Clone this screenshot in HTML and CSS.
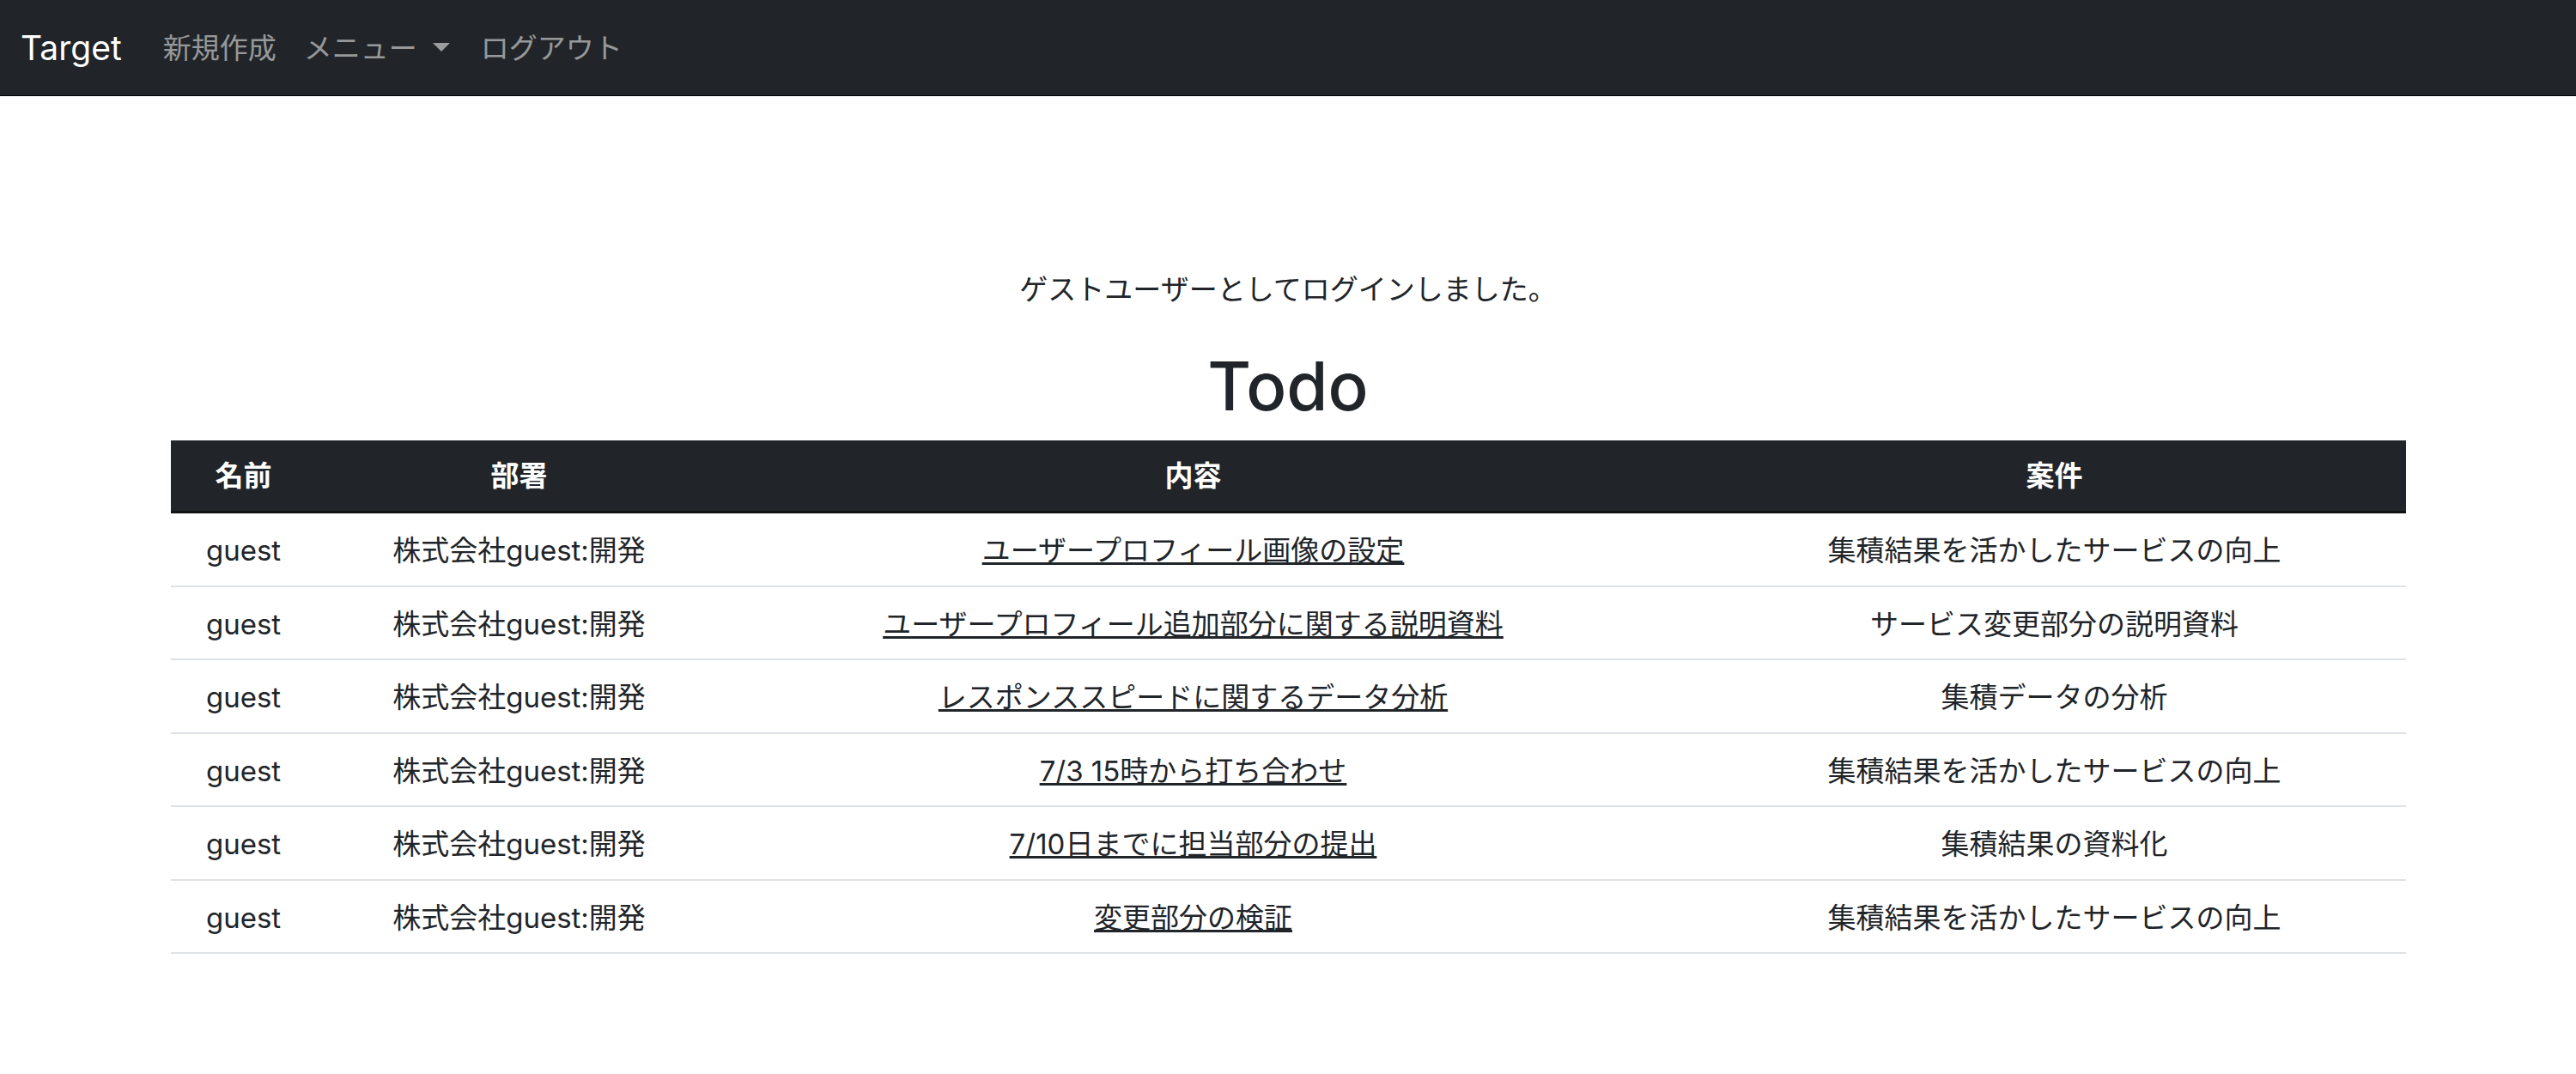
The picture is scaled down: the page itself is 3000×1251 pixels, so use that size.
FILE: index.html
```html
<!DOCTYPE html>
<html lang="ja">
<head>
<meta charset="utf-8">
<title>Todo</title>
<link rel="stylesheet" href="styles.css">
</head>
<body>
<nav class="navbar">
  <a class="brand" href="#">Target</a>
  <ul class="nav">
    <li><a class="nav-link" href="#">新規作成</a></li>
    <li><a class="nav-link dropdown-toggle" href="#">メニュー</a></li>
    <li><a class="nav-link" href="#">ログアウト</a></li>
  </ul>
</nav>
<main class="main">
  <p class="notice">ゲストユーザーとしてログインしました。</p>
  <h1 class="title">Todo</h1>
  <table class="todo-table">
    <colgroup>
      <col class="c-name">
      <col class="c-dept">
      <col class="c-content">
      <col class="c-project">
    </colgroup>
    <thead>
      <tr><th>名前</th><th>部署</th><th>内容</th><th class="proj">案件</th></tr>
    </thead>
    <tbody>
      <tr><td>guest</td><td>株式会社guest:開発</td><td><a href="#">ユーザープロフィール画像の設定</a></td><td class="proj">集積結果を活かしたサービスの向上</td></tr>
      <tr><td>guest</td><td>株式会社guest:開発</td><td><a href="#">ユーザープロフィール追加部分に関する説明資料</a></td><td class="proj">サービス変更部分の説明資料</td></tr>
      <tr><td>guest</td><td>株式会社guest:開発</td><td><a href="#">レスポンススピードに関するデータ分析</a></td><td class="proj">集積データの分析</td></tr>
      <tr><td>guest</td><td>株式会社guest:開発</td><td><a href="#">7/3 15時から打ち合わせ</a></td><td class="proj">集積結果を活かしたサービスの向上</td></tr>
      <tr><td>guest</td><td>株式会社guest:開発</td><td><a href="#">7/10日までに担当部分の提出</a></td><td class="proj">集積結果の資料化</td></tr>
      <tr><td>guest</td><td>株式会社guest:開発</td><td><a href="#">変更部分の検証</a></td><td class="proj">集積結果を活かしたサービスの向上</td></tr>
    </tbody>
  </table>
</main>
</body>
</html>
```

FILE: styles.css
```css
html, body {
  margin: 0;
  padding: 0;
}
body {
  font-family: Inter, "Noto Sans CJK JP", sans-serif;
  font-size: 33px;
  line-height: 48px;
  color: #212529;
  background: #ffffff;
}
a {
  color: inherit;
}
.navbar {
  display: flex;
  align-items: center;
  background: #212529;
  padding: 16px 24px;
  height: 112px;
  box-sizing: border-box;
  border-bottom: 1px solid #000;
}
.brand {
  color: #ffffff;
  font-size: 39px;
  line-height: 60px;
  padding: 10px 0;
  margin-right: 32px;
  text-decoration: none;
}
.nav {
  display: flex;
  list-style: none;
  margin: 0;
  padding: 0;
}
.nav-link {
  display: block;
  padding: 16px 16px;
  color: rgba(255, 255, 255, 0.55);
  text-decoration: none;
  font-size: 33px;
  line-height: 48px;
}
.dropdown-toggle::after {
  content: "";
  display: inline-block;
  margin-left: 18px;
  margin-right: 4px;
  vertical-align: 8px;
  border-top: 10px solid;
  border-right: 10px solid transparent;
  border-left: 10px solid transparent;
  border-bottom: 0;
}
.main {
  text-align: center;
}
.notice {
  margin: 201px 0 0;
  line-height: 48px;
}
.title {
  margin: 41px 0 15px;
  font-size: 78px;
  line-height: 96px;
  font-weight: 500;
}
.todo-table {
  width: 2603px;
  margin: 0 auto;
  border-collapse: collapse;
  table-layout: fixed;
}
.c-name { width: 170px; }
.c-dept { width: 472px; }
.c-content { width: 1098px; }
.c-project { width: 863px; }
.todo-table th {
  background: #212529;
  color: #ffffff;
  font-weight: 700;
  padding: 17px 16px;
  line-height: 48px;
  border-bottom: 3px solid #111315;
  text-align: center;
}
.todo-table td {
  padding: 18px 16px 14px;
  line-height: 51.5px;
  border-bottom: 2px solid #dee2e6;
  text-align: center;
  white-space: nowrap;
}
.todo-table .proj {
  padding-left: 61px;
}
.todo-table td a {
  color: #212529;
  text-decoration: underline;
}
```
